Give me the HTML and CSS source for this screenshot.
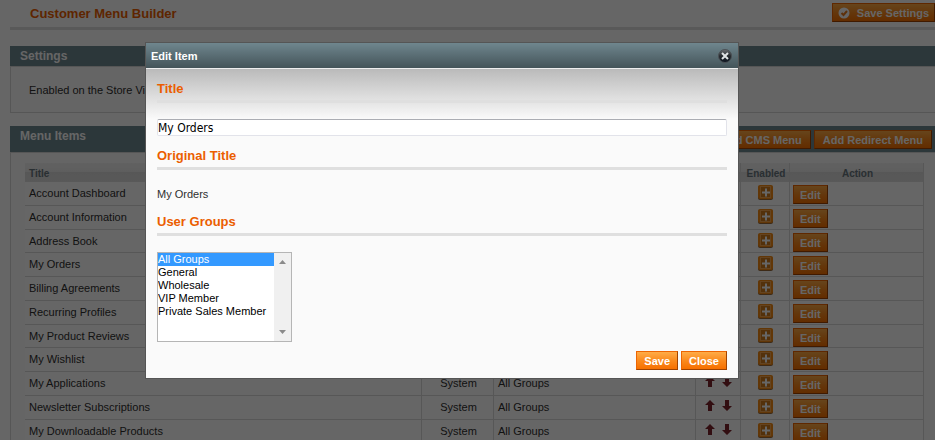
FILE: index.html
```html
<!DOCTYPE html>
<html lang="en">
<head>
    <meta charset="UTF-8">
    <meta name="viewport" content="width=device-width, initial-scale=1.0">
    <title>Customer Menu Builder</title>
    <link rel="stylesheet" href="styles.css">
</head>
<body>
    <svg class="symbols" aria-hidden="true">
        <symbol id="plus" viewBox="0 0 15 15">
            <rect x="0" y="1" width="15" height="14" rx="2" fill="#9a6a3a"/>
            <rect x="0" y="0" width="15" height="14" rx="2" fill="#f58a12"/>
            <rect x="2.5" y="1.5" width="10" height="11" fill="#cf7a1c" stroke="#f7a850"/>
            <path d="M4 7.5h8M8 3.5v8" stroke="#fff" stroke-width="2"/>
        </symbol>
        <symbol id="up" viewBox="0 0 10 11">
            <path d="M5 0l5 5H7v6H3V5H0z" fill="#7d232b"/>
        </symbol>
        <symbol id="down" viewBox="0 0 10 11">
            <path d="M5 11l5-5H7V0H3v6H0z" fill="#7d232b"/>
        </symbol>
    </svg>

    <div class="page">
        <div class="content-header">
            <h1>Customer Menu Builder</h1>
            <button type="button" class="btn btn-save">
                <svg width="12" height="12" viewBox="0 0 12 12"><circle cx="6" cy="6" r="5.5" fill="#fff"/><path d="M3.5 6l2 2 3.500-4" fill="none" stroke="#e8791a" stroke-width="2"/></svg>
                Save Settings
            </button>
        </div>

        <div class="section">
            <div class="section-head"><h2>Settings</h2></div>
            <div class="section-body settings">Enabled on the Store View</div>
        </div>

        <div class="section">
            <div class="section-head with-buttons">
                <h2>Menu Items</h2>
                <div class="buttons">
                    <button type="button" class="btn">Add CMS Menu</button>
                    <button type="button" class="btn">Add Redirect Menu</button>
                </div>
            </div>
            <div class="section-body grid">
                <table>
                    <colgroup>
                        <col>
                        <col class="col-type">
                        <col class="col-groups">
                        <col class="col-sort">
                        <col class="col-enabled">
                        <col class="col-action">
                    </colgroup>
                    <thead>
                        <tr><th class="left">Title</th><th>Type</th><th>Groups</th><th>Sort</th><th>Enabled</th><th>Action</th></tr>
                    </thead>
                    <tbody id="items"></tbody>
                </table>
            </div>
        </div>
    </div>

    <div class="overlay"></div>

    <div class="dialog" role="dialog" aria-labelledby="dialog-title">
        <div class="dialog-head">
            <h2 id="dialog-title">Edit Item</h2>
            <button type="button" class="dialog-close" aria-label="Close window">
                <svg width="14" height="14" viewBox="0 0 14 14">
                    <defs><linearGradient id="ball" x1="0" y1="0" x2="0" y2="1"><stop offset="0" stop-color="#6b6f73"/><stop offset=".5" stop-color="#25292d"/><stop offset="1" stop-color="#0c1420"/></linearGradient></defs>
                    <circle cx="7" cy="7" r="6.500" fill="url(#ball)" stroke="#4a5054"/>
                    <path d="M4 4l6 6M10 4l-6 6" stroke="#dfe3e5" stroke-width="2"/>
                </svg>
            </button>
        </div>
        <form class="dialog-body">
            <h3><label for="title">Title</label></h3>
            <input type="text" id="title" value="My Orders">
            <h3>Original Title</h3>
            <p>My Orders</p>
            <h3><label for="groups">User Groups</label></h3>
            <div class="listbox">
                <select id="groups" multiple size="6">
                    <option selected>All Groups</option>
                    <option>General</option>
                    <option>Wholesale</option>
                    <option>VIP Member</option>
                    <option>Private Sales Member</option>
                </select>
                <div class="scrollbar">
                    <svg width="7" height="4" viewBox="0 0 7 4"><path d="M0 4l3.500-4L7 4z" fill="#8a8a8a"/></svg>
                    <svg width="7" height="4" viewBox="0 0 7 4"><path d="M0 0l3.500 4L7 0z" fill="#8a8a8a"/></svg>
                </div>
            </div>
            <div class="dialog-buttons">
                <button type="button" class="btn">Save</button>
                <button type="button" class="btn">Close</button>
            </div>
        </form>
    </div>

    <script>
        const titles = [
            'Account Dashboard', 'Account Information', 'Address Book', 'My Orders',
            'Billing Agreements', 'Recurring Profiles', 'My Product Reviews', 'My Wishlist',
            'My Applications', 'Newsletter Subscriptions', 'My Downloadable Products'
        ];

        document.getElementById('items').innerHTML = titles.map(title => `
            <tr>
                <td>${title}</td>
                <td class="center">System</td>
                <td>All Groups</td>
                <td class="sort">
                    <svg width="10" height="11"><use href="#up"/></svg>
                    <svg width="10" height="11"><use href="#down"/></svg>
                </td>
                <td class="icon"><svg width="15" height="15"><use href="#plus"/></svg></td>
                <td class="action"><button type="button" class="btn">Edit</button></td>
            </tr>`).join('');
    </script>
</body>
</html>
```
FILE: styles.css
```css
* {
    box-sizing: border-box;
}

html, body {
    height: 100%;
    margin: 0;
    overflow: hidden;
}

body {
    font: 11px/16px "Liberation Sans", Arial, sans-serif;
    color: #2f2f2f;
    background: #fff;
}

h1, h2, h3, p {
    margin: 0;
}

.symbols {
    display: none;
}

.page {
    height: 100%;
    padding-left: 10px;
    overflow: hidden;
}

/* buttons */
.btn {
    height: 19px;
    padding: 0 7px;
    border: 1px solid;
    border-color: #ed6502 #a04300 #a04300 #ed6502;
    background: linear-gradient(#ffac47, #fa8a1e 50%, #f77000);
    color: #fff;
    font: bold 11px/16px "Liberation Sans", Arial, sans-serif;
    white-space: nowrap;
    cursor: pointer;
}

.btn-save {
    display: flex;
    align-items: center;
    gap: 7px;
    padding: 0 5px;
}

/* page header */
.content-header {
    display: flex;
    justify-content: space-between;
    height: 30px;
    padding: 3px 0 0 20px;
    border-bottom: 3px solid #dfdfdf;
    margin-bottom: 16px;
}

.content-header h1 {
    color: #eb5e00;
    font-size: 13px;
    line-height: 22px;
}

/* sections */
.section {
    margin-bottom: 13px;
}

.section-head {
    display: flex;
    justify-content: space-between;
    height: 20px;
    padding: 0 3px 0 10px;
    background: #6f8992;
}

.section-head.with-buttons {
    height: 26px;
}

.section-head h2 {
    color: #fff;
    font-size: 12px;
    line-height: 20px;
}

.section-head .buttons {
    display: flex;
    gap: 3px;
    padding-top: 4px;
}

.section-head .btn {
    padding: 0 8px;
}

.section-body {
    border: 1px solid #d6d6d6;
    border-width: 1px 0 1px 1px;
    background: #fcfcfc;
}

.settings {
    padding: 15px 18px 14px;
}

.grid {
    padding: 10px 11px 9px 14px;
}

/* items table */
table {
    width: 100%;
    table-layout: fixed;
    border-collapse: separate;
    border-spacing: 0;
    background: #fff;
}

.col-type { width: 72px; }
.col-groups { width: 202px; }
.col-sort { width: 45px; }
.col-enabled { width: 49px; }
.col-action { width: 134px; }

th {
    height: 19px;
    padding: 2px 2px 0 4px;
    border-right: 1px solid #dadada;
    background: linear-gradient(#f2f2f2, #ebebeb 50%, #dadada 50%, #dedede);
    color: #67767e;
    font-size: 10px;
    line-height: 17px;
}

.left {
    text-align: left;
}

td {
    height: 24px;
    padding: 0 2px 0 4px;
    border: 1px solid #dadada;
    border-width: 0 1px 1px 0;
    line-height: 22px;
    vertical-align: top;
}

tr:nth-child(4n+3) td {
    height: 23px;
}

.center {
    text-align: center;
}

.sort, .icon, .action {
    padding: 3px 3px 0;
    font-size: 0;
    line-height: 0;
    white-space: nowrap;
}

.sort, .icon {
    text-align: center;
}

.sort {
    padding-top: 4px;
}

.sort svg + svg {
    margin-left: 7px;
}

.action .btn {
    padding: 0 6px;
}

/* dialog */
.overlay {
    position: fixed;
    inset: 0;
    background: rgba(0, 0, 0, 0.6);
}

.dialog {
    position: absolute;
    top: 42px;
    left: 145px;
    right: 196px;
    border: 1px solid #555;
    background: #fafafa;
}

.dialog-head {
    display: flex;
    align-items: center;
    justify-content: space-between;
    height: 26px;
    padding: 0 6px 0 5px;
    border-bottom: 1px solid #eee;
    background: linear-gradient(#6f868e, #445459);
}

.dialog-head h2 {
    color: #fff;
    font-size: 11px;
}

.dialog-close {
    display: flex;
    padding: 0;
    border: 0;
    background: none;
    cursor: pointer;
}

.dialog-body {
    padding: 11px 11px 8px;
    background: linear-gradient(#bababa, #fafafa 50px);
}

.dialog-body h3 {
    margin-bottom: 16px;
    padding-bottom: 2px;
    border-bottom: 3px solid #dfdfdf;
    color: #eb5e00;
    font-size: 13px;
    line-height: 18px;
}

.dialog-body input {
    display: block;
    width: 100%;
    height: 17px;
    padding: 0;
    border: 1px solid #e2e3ea;
    border-top-color: #abadb3;
    border-radius: 2px;
    margin-bottom: 11px;
    background: #fff;
    color: #000;
    font: 12px/15px "DejaVu Sans Condensed", "Noto Sans", Tahoma, sans-serif;
}

.dialog-body p {
    margin-bottom: 11px;
}

.listbox {
    display: flex;
    width: 135px;
    height: 90px;
    border: 1px solid #b5b5b5;
    margin-bottom: 9px;
}

.listbox select {
    flex: 1;
    min-width: 0;
    padding: 0;
    border: 0;
    border-radius: 0;
    outline: 0;
    background: #fff;
    color: #000;
    font: 11px/13px "Liberation Sans", Arial, sans-serif;
    overflow: hidden;
}

.listbox option {
    height: 13px;
    min-height: 13px;
    padding: 0;
    line-height: 13px;
}

.listbox option:checked {
    background: linear-gradient(#39f, #39f);
    color: #fff;
    -webkit-text-fill-color: #fff;
}

.scrollbar {
    display: flex;
    flex-direction: column;
    justify-content: space-between;
    align-items: center;
    width: 17px;
    padding: 7px 0;
    background: #f0f0f0;
}

.dialog-buttons {
    display: flex;
    justify-content: flex-end;
    gap: 3px;
}
```
